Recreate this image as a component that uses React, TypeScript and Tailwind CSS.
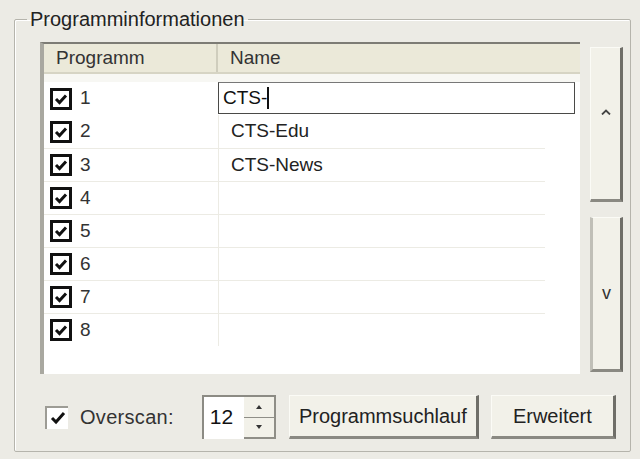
import React from 'react'

const font = { fontFamily: '"Liberation Sans", Arial, sans-serif' }

function ListCheck() {
  return (
    <svg width="22" height="22" viewBox="0 0 22 22" className="shrink-0">
      <rect x="1.5" y="1.5" width="19" height="19" fill="#fff" stroke="#111" strokeWidth="3" />
      <path d="M6 11 L9.5 14.5 L16 7.5" fill="none" stroke="#111" strokeWidth="3" />
    </svg>
  )
}

export default function App() {
  const rows = [
    { n: '1', name: '' },
    { n: '2', name: 'CTS-Edu' },
    { n: '3', name: 'CTS-News' },
    { n: '4', name: '' },
    { n: '5', name: '' },
    { n: '6', name: '' },
    { n: '7', name: '' },
    { n: '8', name: '' },
  ]

  return (
    <div className="w-[640px] h-[459px] bg-[#ecebe5] pt-[6px] pl-[14px] pr-[10px] text-[#1a1a1a]" style={font}>
      <fieldset className="h-[446px] border border-[#b5b4ac] shadow-[inset_1px_1px_0_#fff] pl-[25px] pr-[7px] pt-[10px] pb-[9px] rounded-[2px]">
        <legend className="-ml-[13px] px-[3px] text-[20px] leading-[26px] text-[#222]">Programminformationen</legend>

        <div className="flex gap-[10px]">
          {/* list view */}
          <div className="w-[540px] h-[332px] bg-white border-t-2 border-l-[4px] border-t-[#7d7c75] border-l-[#a9a8a0] overflow-hidden">
            <div className="flex h-[30px] bg-[#ebe9d9] border-b-2 border-[#d6d4c4] text-[19px] leading-[28px] text-[#333]">
              <div className="w-[174px] pl-[12px] border-r-2 border-[#cfcdbd]">Programm</div>
              <div className="pl-[12px]">Name</div>
            </div>
            <div className="h-[8px] bg-[#f7f7f3]" />
            {rows.map((r, i) => (
              <div key={r.n} className={`flex h-[33px] text-[19px] ${i >= 2 ? 'border-t border-[#ecebe4] w-[501px]' : ''}`}>
                <div className="w-[174px] flex items-center gap-[8px] pl-[6px]">
                  <ListCheck />
                  <span className="text-[#333]">{r.n}</span>
                </div>
                {i === 0 ? (
                  <div className="w-[357px] h-[32px] border border-[#4a4a48] border-t-[#777] flex items-center pl-[4px] text-[19px] text-[#111]">
                    CTS-<span className="w-[2px] h-[22px] bg-[#111]" />
                  </div>
                ) : (
                  <div className="flex-1 border-l border-[#ecebe4] flex items-center pl-[12px] text-[#222]">{r.name}</div>
                )}
              </div>
            ))}
          </div>

          {/* up/down buttons */}
          <div className="w-[33px] mt-[5px] flex flex-col gap-[15px]">
            <div className="h-[155px] bg-[#f2f1e9] border-l border-t border-[#fbfbf6] border-r-[3px] border-b-[3px] border-r-[#6f6e68] border-b-[#8a8982] flex items-center justify-center pb-[24px]">
              <svg width="10" height="6" viewBox="0 0 10 6"><path d="M1 5.5 L5 1.5 L9 5.5" fill="none" stroke="#444" strokeWidth="1.8" /></svg>
            </div>
            <div className="h-[155px] bg-[#f2f1e9] border-l-[3px] border-t border-l-[#c0bfb7] border-t-[#fbfbf6] border-r-[3px] border-b-[3px] border-r-[#6f6e68] border-b-[#8a8982] flex items-center justify-center text-[18px] text-[#333]">
              v
            </div>
          </div>
        </div>

        {/* bottom row */}
        <div className="flex items-center mt-[21px] h-[44px] text-[20px]">
          <div className="w-[23px] h-[23px] ml-[5px] bg-white border-l-2 border-t-2 border-[#9d9c95] flex items-center justify-center">
            <svg width="16" height="14" viewBox="0 0 16 14"><path d="M2 7 L6 11 L14 2" fill="none" stroke="#111" strokeWidth="3" /></svg>
          </div>
          <span className="ml-[12px] text-[#333] tracking-[0.3px]">Overscan:</span>
          <div className="ml-[28px] flex h-[44px] border-l-2 border-t-2 border-[#8c8b84] bg-white">
            <span className="w-[40px] pl-[6px] leading-[40px] text-[21px] text-[#111]">12</span>
            <div className="w-[32px] flex flex-col bg-[#f2f1e9]">
              <div className="flex-1 flex items-center justify-center border-b border-r-2 border-[#8f8e87]">
                <svg width="6" height="4" viewBox="0 0 6 4"><path d="M0 4 L3 0 L6 4Z" fill="#333" /></svg>
              </div>
              <div className="flex-1 flex items-center justify-center border-r-2 border-b-2 border-[#8f8e87]">
                <svg width="6" height="4" viewBox="0 0 6 4"><path d="M0 0 L6 0 L3 4Z" fill="#333" /></svg>
              </div>
            </div>
          </div>
          <button className="ml-[13px] w-[190px] h-[44px] bg-[#f2f1e9] border-l border-t border-[#fbfbf6] border-r-[3px] border-b-[3px] border-r-[#6f6e68] border-b-[#8a8982] text-[20px] text-[#222]">
            Programmsuchlauf
          </button>
          <button className="ml-[12px] w-[125px] h-[44px] bg-[#f2f1e9] border-l border-t border-[#fbfbf6] border-r-[3px] border-b-[3px] border-r-[#6f6e68] border-b-[#8a8982] text-[20px] text-[#222]">
            Erweitert
          </button>
        </div>
      </fieldset>
    </div>
  )
}
